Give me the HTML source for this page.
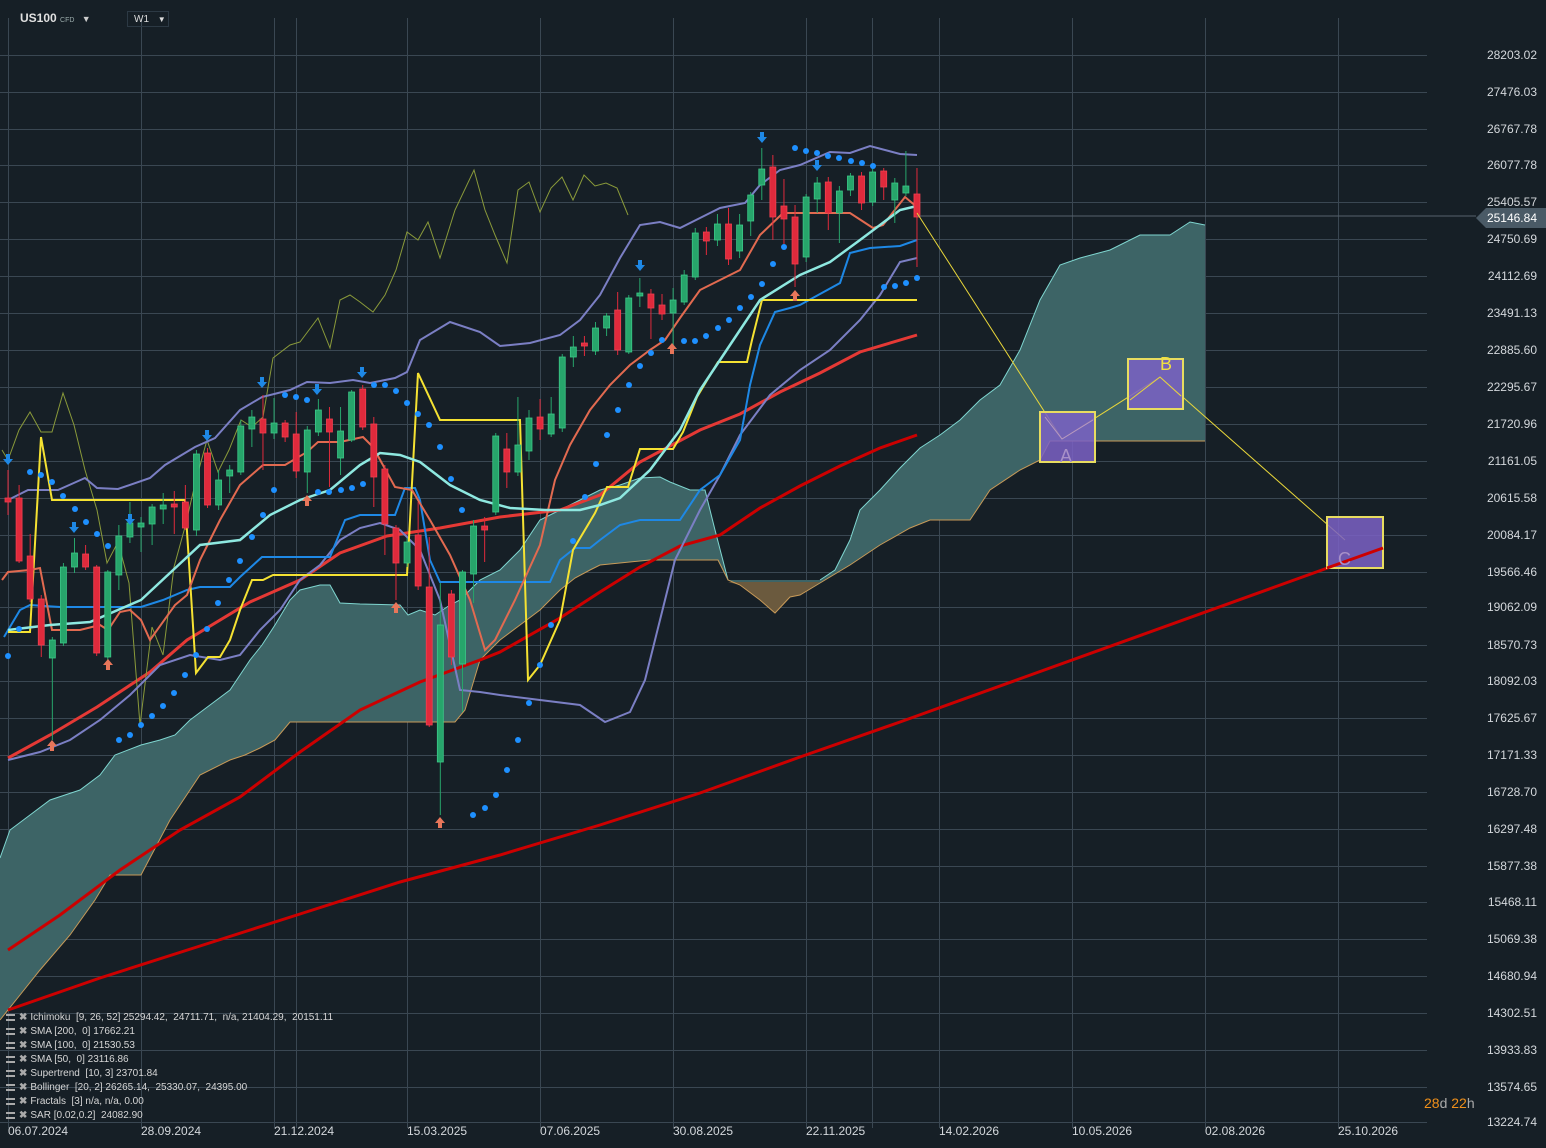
<!DOCTYPE html>
<html><head><meta charset="utf-8"><style>
html,body{margin:0;padding:0;background:#161f26;width:1546px;height:1148px;overflow:hidden;font-family:"Liberation Sans",sans-serif}
svg{position:absolute;left:0;top:0}
.t{position:absolute;color:#d4d8dc;font-size:12px;white-space:nowrap}
.pl{position:absolute;right:9px;color:#d4d8dc;font-size:12px;text-align:right}
.dl{position:absolute;top:1124px;color:#d4d8dc;font-size:12px}
.lg{position:absolute;left:6px;font-size:10px;color:#d6d6d6;white-space:nowrap}
.lg b{display:inline-block;width:9px;height:7px;border-top:2px solid #aaa;border-bottom:2px solid #aaa;box-sizing:border-box;margin-right:4px;vertical-align:-1px}
.lg i{font-style:normal;color:#aaa;margin-right:3px;font-weight:bold}
</style></head><body>
<svg id="s" width="1546" height="1148" xmlns="http://www.w3.org/2000/svg">
<g id="grid" stroke="#3a4752" stroke-width="1"></g>
<polygon fill="#3d6466" points="0,858 10,830 30,815 50,800 80,790 100,775 115,755 141,745 160,740 175,735 190,720 210,705 230,690 250,660 262,645 275,625 290,600 300,590 320,585 330,585 340,603 360,604 400,605 408,615 420,610 435,615 450,605 460,600 470,590 480,580 500,570 510,560 520,550 540,520 560,510 580,500 600,490 620,485 640,478 660,477 670,482 690,490 705,490 715,530 728,580 820,580 835,570 850,540 860,510 880,490 900,468 920,448 940,435 960,420 980,400 1000,385 1020,350 1040,300 1060,265 1080,258 1110,250 1140,235 1170,235 1190,222 1205,225 1205,441 1050,441 1040,460 1020,470 990,490 970,520 930,520 910,528 880,545 850,565 820,583 800,595 790,597 775,613 760,600 740,585 728,580 718,560 650,560 600,565 590,570 575,578 560,590 540,610 500,640 480,660 465,710 455,722 290,722 275,740 260,748 245,755 230,760 200,775 170,820 141,875 110,875 95,900 70,935 40,970 20,995 0,1020"/>
<polygon fill="#6b5a3e" points="728,582 820,582 800,595 790,597 775,613 760,600 740,585"/>
<polyline fill="none" stroke="#7fd6d0" stroke-width="1" points="0,858 10,830 30,815 50,800 80,790 100,775 115,755 141,745 160,740 175,735 190,720 210,705 230,690 250,660 262,645 275,625 290,600 300,590 320,585 330,585 340,603 360,604 400,605 408,615 420,610 435,615 450,605 460,600 470,590 480,580 500,570 510,560 520,550 540,520 560,510 580,500 600,490 620,485 640,478 660,477 670,482 690,490 705,490 715,530 728,580"/>
<polyline fill="none" stroke="#7fd6d0" stroke-width="1" points="820,580 835,570 850,540 860,510 880,490 900,468 920,448 940,435 960,420 980,400 1000,385 1020,350 1040,300 1060,265 1080,258 1110,250 1140,235 1170,235 1190,222 1205,225"/>
<polyline fill="none" stroke="#c89a58" stroke-width="1" points="1205,441 1050,441 1040,460 1020,470 990,490 970,520 930,520 910,528 880,545 850,565 820,583 800,595 790,597 775,613 760,600 740,585 728,580 718,560 650,560 600,565 590,570 575,578 560,590 540,610 500,640 480,660 465,710 455,722 290,722 275,740 260,748 245,755 230,760 200,775 170,820 141,875 110,875 95,900 70,935 40,970 20,995 0,1020"/>
<polyline fill="none" stroke="#cc0000" stroke-width="3" points="8,1010 100,978 200,946 300,914 400,882 500,855 600,825 700,793 800,757 900,722 1383,548"/>
<polyline fill="none" stroke="#cc0000" stroke-width="3" points="8,950 60,915 120,870 180,830 240,797 300,752 360,710 420,682 480,660 500,652 560,618 600,592 640,567 680,546 720,535 760,508 800,486 840,466 880,448 917,435"/>
<polyline fill="none" stroke="#e53935" stroke-width="3" points="8,758 50,735 97,707 150,672 187,640 250,602 300,580 340,553 387,536 440,528 500,517 560,510 600,495 640,462 700,430 740,414 780,392 820,373 860,352 917,335"/>
<polyline fill="none" stroke="#8a9a3a" stroke-width="1" points="2,450 8,460 19,430 30,412 41,432 52,432 63,393 74,425 85,470 97,510 107,563 118,542 129,583 140,725 152,627 163,655 174,567 185,527 196,480 207,440 218,472 229,450 241,420 252,427 263,417 273,358 290,345 300,342 318,318 330,348 340,300 350,295 360,302 373,312 385,295 396,270 407,232 418,240 428,222 440,258 455,210 474,170 485,210 495,235 507,263 518,190 529,182 540,212 551,188 562,177 573,200 584,175 595,186 606,183 617,188 628,215"/>
<polyline fill="none" stroke="#7b7fc4" stroke-width="2" points="8,500 28,490 58,490 85,478 97,488 118,489 150,478 165,465 195,447 215,438 240,410 262,397 290,390 307,382 330,383 353,380 370,383 395,378 407,372 420,340 450,322 480,332 500,346 530,343 560,335 580,320 600,295 620,258 640,225 660,222 680,228 700,218 720,208 745,203 760,185 780,170 800,165 830,152 850,153 870,146 900,154 917,155"/>
<polyline fill="none" stroke="#7b7fc4" stroke-width="2" points="8,760 40,752 70,740 100,720 130,695 160,665 190,655 220,660 240,655 260,630 280,610 300,580 320,565 340,540 360,528 380,523 400,530 420,550 440,600 460,690 480,692 500,695 540,700 580,705 605,722 630,712 645,680 660,620 675,560 700,510 720,475 740,435 770,395 800,370 830,350 860,320 880,295 900,262 917,258"/>
<polyline fill="none" stroke="#1e88e5" stroke-width="2" points="4,637 20,610 30,605 60,607 141,607 163,600 187,590 200,587 230,587 240,577 262,557 330,557 345,520 360,515 395,515 405,488 415,488 420,500 430,560 440,582 550,582 560,560 575,548 590,548 600,540 620,525 640,520 680,520 690,505 700,490 720,475 740,440 750,385 760,345 775,312 790,308 800,305 840,283 850,253 870,248 900,246 917,240"/>
<polyline fill="none" stroke="#f5e232" stroke-width="2" points="8,632 30,632 41,437 52,500 185,500 196,673 208,657 220,657 230,640 240,610 252,580 263,580 273,575 407,575 418,373 440,420 520,420 528,680 540,665 560,620 573,550 595,513 607,487 628,487 640,449 673,449 683,432 697,397 718,362 747,362 752,340 762,300 917,300"/>
<polyline fill="none" stroke="#e26a50" stroke-width="2" points="2,580 8,572 30,570 40,568 52,630 80,630 100,625 108,630 120,612 130,610 141,620 150,640 175,605 187,595 200,560 220,520 240,485 263,465 285,465 307,452 318,442 340,442 363,437 373,447 395,487 412,490 430,520 450,555 470,600 485,650 495,640 515,600 540,545 555,480 570,445 590,410 610,385 630,365 650,350 665,340 680,318 700,290 740,270 760,235 783,213 850,213 873,228 883,225 905,197 917,207"/>
<polyline fill="none" stroke="#8ee8e0" stroke-width="2.5" points="8,630 50,625 90,622 141,600 200,545 240,540 270,515 300,500 330,490 360,465 380,453 400,455 420,462 450,485 480,500 510,508 545,510 580,510 600,505 620,498 650,470 680,430 700,390 720,360 740,330 760,300 800,275 830,262 860,240 880,225 900,210 917,206"/>
<g id="cd"></g>
<g id="dots" fill="#1e90ff"></g>
<g id="arr"></g>
<line x1="917" y1="216" x2="1476" y2="216" stroke="#55626c" stroke-width="1"/>
<polyline fill="none" stroke="#e8d63a" stroke-width="1" points="917,213 1062,439 1160,377 1345,540"/>
<rect x="1040" y="412" width="55" height="50" fill="#7b62c6" fill-opacity="0.85" stroke="#e8dc60" stroke-width="2"/>
<rect x="1128" y="359" width="55" height="50" fill="#7b62c6" fill-opacity="0.85" stroke="#e8dc60" stroke-width="2"/>
<rect x="1327" y="517" width="56" height="51" fill="#7b62c6" fill-opacity="0.85" stroke="#e8dc60" stroke-width="2"/>
<polyline fill="none" stroke="#b89ac0" stroke-width="1" points="1045,417 1062,439 1093,420"/>
<polyline fill="none" stroke="#e8d63a" stroke-width="1" points="1130,400 1160,377 1181,396"/>
<line x1="1383" y1="548" x2="1327" y2="568" stroke="#cc0000" stroke-width="3"/>
<text x="1060" y="462" font-family="Liberation Sans" font-size="18" fill="#a890c8">A</text>
<text x="1160" y="370" font-family="Liberation Sans" font-size="18" fill="#f0e040">B</text>
<text x="1338" y="565" font-family="Liberation Sans" font-size="18" fill="#a890c8">C</text>
<polygon points="1476,218 1486,208 1546,208 1546,228 1486,228" fill="#4a5a66"/>
</svg>
<div class="t" style="left:20px;top:11px;font-weight:bold;font-size:12px;color:#e0e0e0">US100 <span style="font-size:7px;color:#9aa;font-weight:normal">CFD</span> <span style="font-size:9px;color:#ccc;margin-left:4px">▼</span></div>
<div style="position:absolute;left:127px;top:11px;width:42px;height:16px;border:1px solid #2c3944;box-sizing:border-box;font-size:10px;color:#ddd;padding:2px 0 0 6px">W1 <span style="font-size:8px;margin-left:6px">▼</span></div>
<div id="pl"></div>
<div class="pl" style="top:211px;color:#fff">25146.84</div>
<div id="dl"></div>
<div class="t" style="left:1424px;top:1095px;font-size:14px"><span style="color:#f0901a">28</span><span style="color:#aaa">d </span><span style="color:#f0901a">22</span><span style="color:#aaa">h</span></div>
<div class="lg" style="top:1012px"><b></b><i>✖</i>Ichimoku &nbsp;[9, 26, 52] 25294.42, &nbsp;24711.71, &nbsp;n/a, 21404.29, &nbsp;20151.11</div>
<div class="lg" style="top:1026px"><b></b><i>✖</i>SMA [200, &nbsp;0] 17662.21</div>
<div class="lg" style="top:1040px"><b></b><i>✖</i>SMA [100, &nbsp;0] 21530.53</div>
<div class="lg" style="top:1054px"><b></b><i>✖</i>SMA [50, &nbsp;0] 23116.86</div>
<div class="lg" style="top:1068px"><b></b><i>✖</i>Supertrend &nbsp;[10, 3] 23701.84</div>
<div class="lg" style="top:1082px"><b></b><i>✖</i>Bollinger &nbsp;[20, 2] 26265.14, &nbsp;25330.07, &nbsp;24395.00</div>
<div class="lg" style="top:1096px"><b></b><i>✖</i>Fractals &nbsp;[3] n/a, n/a, 0.00</div>
<div class="lg" style="top:1110px"><b></b><i>✖</i>SAR [0.02,0.2] &nbsp;24082.90</div>
<script>
var NS="http://www.w3.org/2000/svg";
function el(p,n,a){var e=document.createElementNS(NS,n);for(var k in a)e.setAttribute(k,a[k]);p.appendChild(e);return e;}
var g=document.getElementById('grid');
var ys=[55,92,129,165,202,239,276,313,350,387,424,461,498,535,572,607,645,681,718,755,792,829,866,902,939,976,1013,1050,1087,1122];
ys.forEach(function(y){el(g,'line',{x1:0,y1:y+0.5,x2:1427,y2:y+0.5});});
[8,141,274,296,407,540,673,806,872,939,1072,1205,1338].forEach(function(x){el(g,'line',{x1:x+0.5,y1:18,x2:x+0.5,y2:1128});});
</script>
<div style="display:none"></div>
<div class="pl" style="top:48px">28203.02</div><div class="pl" style="top:85px">27476.03</div><div class="pl" style="top:122px">26767.78</div><div class="pl" style="top:158px">26077.78</div><div class="pl" style="top:195px">25405.57</div><div class="pl" style="top:232px">24750.69</div><div class="pl" style="top:269px">24112.69</div><div class="pl" style="top:306px">23491.13</div><div class="pl" style="top:343px">22885.60</div><div class="pl" style="top:380px">22295.67</div><div class="pl" style="top:417px">21720.96</div><div class="pl" style="top:454px">21161.05</div><div class="pl" style="top:491px">20615.58</div><div class="pl" style="top:528px">20084.17</div><div class="pl" style="top:565px">19566.46</div><div class="pl" style="top:600px">19062.09</div><div class="pl" style="top:638px">18570.73</div><div class="pl" style="top:674px">18092.03</div><div class="pl" style="top:711px">17625.67</div><div class="pl" style="top:748px">17171.33</div><div class="pl" style="top:785px">16728.70</div><div class="pl" style="top:822px">16297.48</div><div class="pl" style="top:859px">15877.38</div><div class="pl" style="top:895px">15468.11</div><div class="pl" style="top:932px">15069.38</div><div class="pl" style="top:969px">14680.94</div><div class="pl" style="top:1006px">14302.51</div><div class="pl" style="top:1043px">13933.83</div><div class="pl" style="top:1080px">13574.65</div><div class="pl" style="top:1115px">13224.74</div>
<div class="dl" style="left:8px">06.07.2024</div><div class="dl" style="left:141px">28.09.2024</div><div class="dl" style="left:274px">21.12.2024</div><div class="dl" style="left:407px">15.03.2025</div><div class="dl" style="left:540px">07.06.2025</div><div class="dl" style="left:673px">30.08.2025</div><div class="dl" style="left:806px">22.11.2025</div><div class="dl" style="left:939px">14.02.2026</div><div class="dl" style="left:1072px">10.05.2026</div><div class="dl" style="left:1205px">02.08.2026</div><div class="dl" style="left:1338px">25.10.2026</div>
<script>
// [top,bottom,high,low,green?]
var C=[[498,502,470,515,0],[498,561,485,563,0],[556,599,534,602,0],[599,645,595,657,0],[640,658,637,740,1],[567,643,563,646,1],[553,567,538,573,1],[554,567,545,570,0],[567,653,565,656,0],[572,657,570,660,1],[536,575,525,590,1],[523,537,502,543,1],[523,527,517,552,1],[507,524,504,545,1],[505,509,493,524,1],[504,507,491,534,0],[502,528,485,530,0],[454,530,450,536,1],[453,505,448,508,0],[480,505,470,510,1],[470,476,465,493,1],[426,472,420,475,1],[417,429,410,447,1],[419,433,395,470,0],[423,433,398,439,1],[423,437,420,442,0],[434,471,412,478,0],[430,472,426,493,1],[410,432,399,436,1],[419,432,407,487,0],[431,458,407,475,1],[392,440,390,442,1],[389,427,385,430,0],[424,477,417,507,0],[469,524,465,555,0],[528,563,525,600,0],[542,563,538,567,1],[535,586,502,590,0],[587,725,537,727,0],[625,762,583,815,1],[594,657,590,665,0],[572,664,570,712,1],[526,574,520,603,1],[526,530,517,562,0],[436,512,433,515,1],[449,472,433,488,0],[445,472,397,476,1],[418,451,410,460,1],[417,429,399,440,0],[414,434,397,437,1],[357,428,354,432,1],[347,357,336,367,1],[343,346,336,356,0],[328,351,322,355,1],[316,328,313,336,1],[310,350,292,355,0],[298,352,295,354,1],[293,296,278,307,1],[294,308,289,339,0],[305,314,294,320,0],[300,313,288,353,1],[275,302,270,305,1],[233,277,228,280,1],[232,241,227,255,0],[224,240,214,246,1],[224,259,208,265,0],[225,251,214,258,1],[195,221,192,236,1],[169,185,148,200,1],[167,217,155,240,0],[206,219,179,244,0],[217,264,205,287,0],[197,257,194,262,1],[183,199,177,213,1],[182,213,177,230,0],[191,213,186,243,1],[176,190,173,196,1],[176,203,172,210,0],[172,202,169,206,1],[171,187,168,200,0],[183,200,178,223,1],[186,193,151,196,1],[194,217,168,267,0]];
var cd=document.getElementById('cd');
C.forEach(function(c,i){var x=8+i*11.085;var col=c[4]?'#27a56b':'#e02a3c';
el(cd,'line',{x1:x,y1:c[2],x2:x,y2:c[3],stroke:col,'stroke-width':1});
el(cd,'rect',{x:x-3,y:c[0],width:6,height:Math.max(2,c[1]-c[0]),fill:col,stroke:c[4]?'#3cc888':'#f04050','stroke-width':0.8});});
var D=[[8,656],[19,629],[30,472],[41,475],[52,482],[63,496],[75,509],[86,522],[97,534],[108,546],[119,740],[130,735],[141,725],[152,716],[163,706],[174,693],[185,675],[196,655],[207,629],[218,603],[229,580],[240,561],[252,537],[263,515],[274,490],[285,395],[296,397],[307,400],[318,492],[329,492],[341,490],[352,488],[363,484],[374,385],[385,385],[396,391],[407,403],[418,414],[429,425],[440,447],[451,479],[462,510],[473,815],[485,808],[496,795],[507,770],[518,740],[529,703],[540,665],[551,625],[573,541],[585,497],[596,464],[607,435],[618,410],[629,385],[640,366],[651,353],[662,340],[684,341],[695,341],[706,336],[718,328],[729,320],[740,308],[751,297],[762,284],[773,264],[784,247],[795,148],[806,151],[817,153],[828,156],[839,158],[851,161],[862,163],[873,166],[884,287],[895,286],[906,283],[917,278]];
var dg=document.getElementById('dots');D.forEach(function(d){el(dg,'circle',{cx:d[0],cy:d[1],r:3});});
var ag=document.getElementById('arr');
[[8,462],[74,530],[130,522],[207,438],[262,385],[317,392],[362,375],[640,268],[762,140],[817,168]].forEach(function(a){var x=a[0],y=a[1];
el(ag,'polygon',{points:(x-2)+','+(y-8)+' '+(x+2)+','+(y-8)+' '+(x+2)+','+(y-3)+' '+(x+5)+','+(y-3)+' '+x+','+(y+3)+' '+(x-5)+','+(y-3)+' '+(x-2)+','+(y-3),fill:'#1e88e5'});});
[[52,745],[108,664],[307,500],[396,607],[440,822],[672,348],[795,295]].forEach(function(a){var x=a[0],y=a[1];
el(ag,'polygon',{points:(x-2)+','+(y+6)+' '+(x+2)+','+(y+6)+' '+(x+2)+','+(y+1)+' '+(x+5)+','+(y+1)+' '+x+','+(y-5)+' '+(x-5)+','+(y+1)+' '+(x-2)+','+(y+1),fill:'#e8765a'});});
</script>
</body></html>
